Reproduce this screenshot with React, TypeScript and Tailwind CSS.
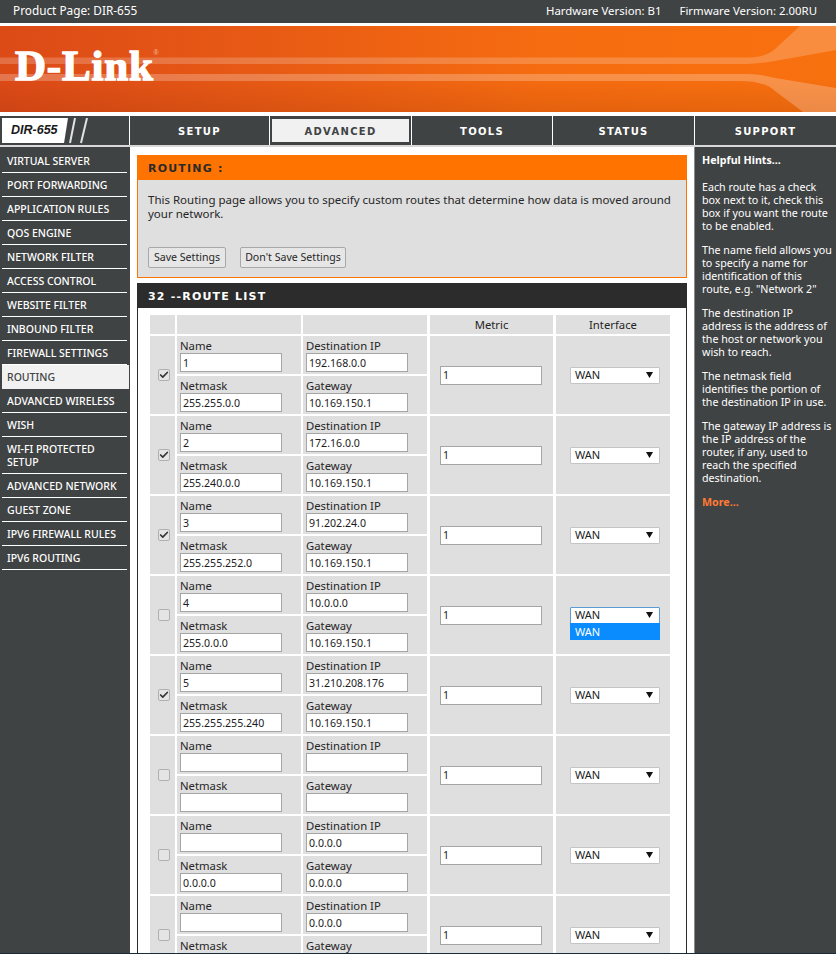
import { Check } from "lucide-react";

const sideItems = [
  "VIRTUAL SERVER",
  "PORT FORWARDING",
  "APPLICATION RULES",
  "QOS ENGINE",
  "NETWORK FILTER",
  "ACCESS CONTROL",
  "WEBSITE FILTER",
  "INBOUND FILTER",
  "FIREWALL SETTINGS",
  "ROUTING",
  "ADVANCED WIRELESS",
  "WISH",
  "WI-FI PROTECTED SETUP",
  "ADVANCED NETWORK",
  "GUEST ZONE",
  "IPV6 FIREWALL RULES",
  "IPV6 ROUTING",
];

const routes = [
  { on: true, name: "1", dest: "192.168.0.0", mask: "255.255.0.0", gw: "10.169.150.1" },
  { on: true, name: "2", dest: "172.16.0.0", mask: "255.240.0.0", gw: "10.169.150.1" },
  { on: true, name: "3", dest: "91.202.24.0", mask: "255.255.252.0", gw: "10.169.150.1" },
  { on: false, name: "4", dest: "10.0.0.0", mask: "255.0.0.0", gw: "10.169.150.1", open: true },
  { on: true, name: "5", dest: "31.210.208.176", mask: "255.255.255.240", gw: "10.169.150.1" },
  { on: false, name: "", dest: "", mask: "", gw: "" },
  { on: false, name: "", dest: "0.0.0.0", mask: "0.0.0.0", gw: "0.0.0.0" },
  { on: false, name: "", dest: "0.0.0.0", mask: "0.0.0.0", gw: "0.0.0.0" },
];

const hints = [
  ["Each route has a check", "box next to it, check this", "box if you want the route", "to be enabled."],
  ["The name field allows you", "to specify a name for", "identification of this", 'route, e.g. "Network 2"'],
  ["The destination IP", "address is the address of", "the host or network you", "wish to reach."],
  ["The netmask field", "identifies the portion of", "the destination IP in use."],
  ["The gateway IP address is", "the IP address of the", "router, if any, used to", "reach the specified", "destination."],
];

function TextField({ value, className }: { value: string; className: string }) {
  return (
    <input
      readOnly
      value={value}
      className={`block h-[19px] border border-[#a5a5a5] bg-white px-[2px] text-[10.6px] text-[#1b1b1b] outline-none ${className}`}
    />
  );
}

function FieldCell({ label, value }: { label: string; value: string }) {
  return (
    <div className="h-[38px] bg-[#dfdfdf] pl-[3px] pt-[3px]">
      <div className="h-[14px] text-[11.3px] leading-[13px] text-[#262626]">{label}</div>
      <TextField value={value} className="w-[102px]" />
    </div>
  );
}

function InterfaceSelect({ open }: { open?: boolean }) {
  return (
    <div className="relative w-[90px]">
      <div
        className={`flex h-[17px] items-center justify-between rounded-[1px] border bg-white pl-[4px] pr-[4px] text-[11px] text-[#222] ${
          open ? "border-[#5b9bd5]" : "border-[#c4c4c4]"
        }`}
      >
        <span className="pt-[1px]">WAN</span>
        <svg width="7" height="6" viewBox="0 0 7 6" className="mr-[2px]">
          <path d="M0 0H7L3.5 6Z" fill="#111" />
        </svg>
      </div>
      {open && (
        <div className="absolute left-0 top-[16px] h-[17px] w-[90px] bg-[#0a8cff] pl-[5px] text-[11px] leading-[17px] text-white">
          WAN
        </div>
      )}
    </div>
  );
}

function RouteRow({ route }: { route: (typeof routes)[number] }) {
  return (
    <div className="mb-[2px] flex h-[78px] gap-[2px]">
      <div className="flex w-[25px] items-center justify-center bg-[#dfdfdf] pl-[2px]">
        <span className="flex h-[12px] w-[12px] items-center justify-center rounded-[2px] border border-[#b0b0b0] bg-[#e4e4e4]">
          {route.on && <Check size={10} strokeWidth={4} className="text-[#333]" />}
        </span>
      </div>
      <div className="grid w-[250px] grid-cols-[124px_124px] gap-[2px]">
        <FieldCell label="Name" value={route.name} />
        <FieldCell label="Destination IP" value={route.dest} />
        <FieldCell label="Netmask" value={route.mask} />
        <FieldCell label="Gateway" value={route.gw} />
      </div>
      <div className="ml-[1px] flex w-[123px] items-center bg-[#dfdfdf] pl-[10px]">
        <TextField value="1" className="w-[102px]" />
      </div>
      <div className="ml-[1px] flex w-[114px] items-center bg-[#dfdfdf] pl-[14px]">
        <InterfaceSelect open={route.open} />
      </div>
    </div>
  );
}

function Banner() {
  return (
    <div className="relative flex h-[86px] items-center overflow-hidden bg-[linear-gradient(180deg,rgba(0,0,0,0)_60%,rgba(120,30,0,0.14)_100%),linear-gradient(90deg,#dc4a17_0%,#e95c14_35%,#f66c10_65%,#f8710f_100%)] pl-[15px]">
      <svg viewBox="0 0 836 86" className="absolute inset-0 h-[86px] w-[836px]">
        <path
          d="M0 31.5H745C760 31.5 768 29 775 23L800 0H836V24L775 35C765 37 750 38 740 38H0Z"
          fill="#fff"
          opacity="0.2"
        />
        <path
          d="M0 48H740C755 48 765 49 775 52L836 62V86H803L775 65C768 58 755 55 740 55H0Z"
          fill="#fff"
          opacity="0.24"
        />
      </svg>
      <span className="relative mb-[8px] font-['Liberation_Serif',serif] text-[43px] font-bold leading-none tracking-[0.8px] text-white [-webkit-text-stroke:1.4px_white]">
        D-Link
        <span className="absolute right-[-5px] top-[5px] font-['Liberation_Sans',sans-serif] text-[7px] font-normal leading-none tracking-normal text-white/60 [-webkit-text-stroke:0]">
          ®
        </span>
      </span>
    </div>
  );
}

function NavBar() {
  const tabs = ["SETUP", "ADVANCED", "TOOLS", "STATUS", "SUPPORT"];
  return (
    <div className="grid h-[29px] grid-cols-[129px_140px_142px_141px_142px_142px] bg-[#404344]">
      <div className="relative pl-[2px] pt-[2px]">
        <div className="flex h-[25px] w-[66px] items-center bg-white pl-[9px] font-['Liberation_Sans',sans-serif] text-[12.5px] font-bold italic text-[#1a1a1a] [clip-path:polygon(0_0,100%_0,94%_100%,0_100%)]">
          DIR-655
        </div>
        <svg width="20" height="26" viewBox="0 0 20 26" className="absolute left-[69px] top-[2px]">
          <path d="M6 0L1 25M18 0L12 25" stroke="#e2e2e2" strokeWidth="2" fill="none" />
        </svg>
      </div>
      {tabs.map((tab) => (
        <div key={tab} className="border-l border-white px-[2px] pt-[3px]">
          <div
            className={`flex h-[23px] items-center justify-center pt-[2px] font-['DejaVu_Sans',sans-serif] text-[10px] font-bold tracking-[1.3px] ${
              tab === "ADVANCED" ? "bg-[#f1f1f1] text-[#404344]" : "text-white"
            }`}
          >
            {tab}
          </div>
        </div>
      ))}
    </div>
  );
}

function Sidebar() {
  return (
    <aside className="w-[130px] shrink-0 bg-[#404344] pl-[2px] pt-[2px]">
      {sideItems.map((item) => (
        <div
          key={item}
          className={
            item === "ROUTING"
              ? "w-[127px] bg-[#f1f1f1] px-[5px] pb-[5px] pt-[6px] text-[10.5px] font-medium leading-[13px] text-[#404344]"
              : "w-[125px] border-b border-white px-[5px] pb-[4px] pt-[6px] text-[10.5px] font-medium leading-[13px] text-white"
          }
        >
          {item}
        </div>
      ))}
    </aside>
  );
}

function HintsPanel() {
  return (
    <aside className="w-[142px] shrink-0 border-l border-[#8a8a8a] bg-[#404344] pl-[7px] pt-[7px] text-[10.7px] leading-[13px] text-white">
      <div className="mb-[14px] font-bold">Helpful Hints...</div>
      {hints.map((lines) => (
        <p key={lines[0]} className="mb-[11px] whitespace-nowrap">
          {lines.map((line) => (
            <span key={line} className="block">
              {line}
            </span>
          ))}
        </p>
      ))}
      <div className="font-bold text-[#ff7a33]">More...</div>
    </aside>
  );
}

export default function App() {
  return (
    <div className="flex h-[954px] w-[836px] flex-col overflow-hidden bg-white font-['Noto_Sans','DejaVu_Sans',sans-serif]">
      <div className="flex h-[23px] shrink-0 items-center justify-between bg-[#404344] pb-[1px] pl-[13px] pr-[19px] text-white">
        <span className="text-[11.8px]">Product Page: DIR-655</span>
        <span className="flex gap-[18px] text-[11.4px]">
          <span>Hardware Version: B1</span>
          <span>Firmware Version: 2.00RU</span>
        </span>
      </div>
      <div className="h-[3px] shrink-0" />
      <Banner />
      <div className="h-[4px] shrink-0" />
      <NavBar />
      <div className="h-[2px] shrink-0 bg-[#d8d8d8]" />
      <div className="flex min-h-0 flex-1">
        <Sidebar />
        <main className="w-[564px] shrink-0 overflow-hidden bg-white pl-[7px] pt-[8px]">
          <section className="h-[123px] w-[550px] border border-t-0 border-[#ff7300] bg-[#dfdfdf]">
            <h2 className="flex h-[25px] items-center bg-[#ff7300] pl-[10px] pt-[3px] font-['DejaVu_Sans',sans-serif] text-[11px] font-bold tracking-[1.2px] text-[#2a2a2a]">
              ROUTING :
            </h2>
            <p className="pl-[10px] pr-[8px] pt-[13px] text-[11.5px] leading-[14px] text-[#262626]">
              This Routing page allows you to specify custom routes that determine how data is moved around your network.
            </p>
            <div className="flex gap-[14px] pl-[10px] pt-[26px]">
              <button className="h-[21px] w-[78px] whitespace-nowrap rounded-[2px] border border-[#a8a8a8] bg-[#e6e6e6] text-[10.6px] text-[#262626]">
                Save Settings
              </button>
              <button className="h-[21px] w-[106px] whitespace-nowrap rounded-[2px] border border-[#a8a8a8] bg-[#e6e6e6] text-[10.6px] text-[#262626]">
                Don't Save Settings
              </button>
            </div>
          </section>
          <section className="mt-[5px] h-[700px] w-[550px] border-x border-[#2c2c2c]">
            <h2 className="flex h-[25px] items-center bg-[#2c2c2c] pl-[10px] pt-[3px] font-['DejaVu_Sans',sans-serif] text-[11px] font-bold tracking-[1.2px] text-white">
              32 --ROUTE LIST
            </h2>
            <div className="pl-[12px] pt-[7px]">
              <div className="mb-[2px] flex h-[19px] gap-[2px] text-[11.3px] text-[#262626]">
                <div className="w-[25px] bg-[#dfdfdf]" />
                <div className="w-[124px] bg-[#dfdfdf]" />
                <div className="w-[124px] bg-[#dfdfdf]" />
                <div className="ml-[1px] flex w-[123px] items-center justify-center bg-[#dfdfdf] pt-[1px]">Metric</div>
                <div className="ml-[1px] flex w-[114px] items-center justify-center bg-[#dfdfdf] pt-[1px]">Interface</div>
              </div>
              {routes.map((route, i) => (
                <RouteRow key={i} route={route} />
              ))}
            </div>
          </section>
        </main>
        <HintsPanel />
      </div>
      <div className="h-px shrink-0 bg-[#1c2b3a]" />
    </div>
  );
}
